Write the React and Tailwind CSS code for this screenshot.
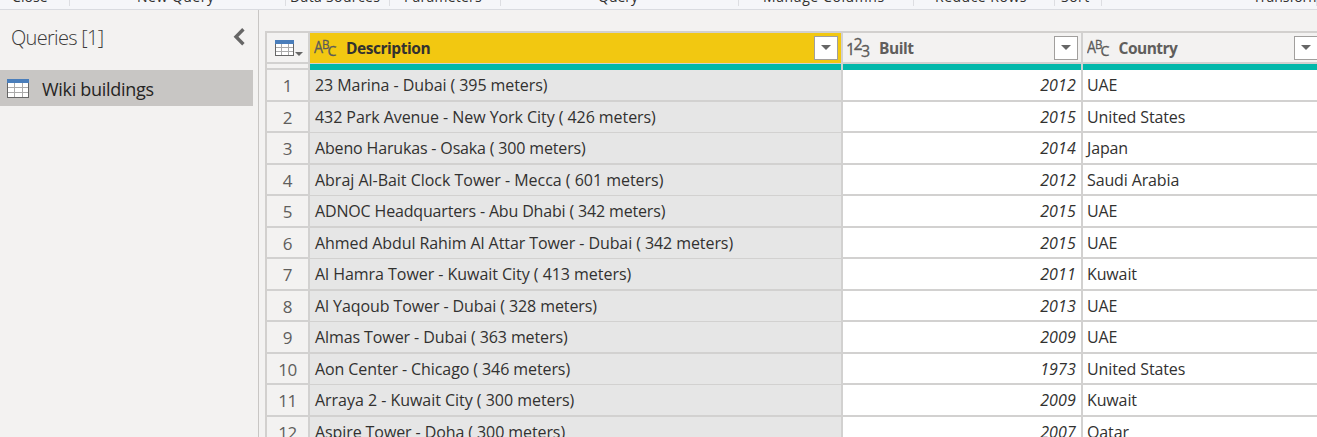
import React from "react";

const GROUPS = [
  { label: "Close", cls: "w-[70px] pl-[12px] tracking-[0.1px]" },
  { label: "New Query", cls: "w-[216px] pl-[67px] tracking-[0.5px]" },
  { label: "Data Sources", cls: "w-[104px] pl-[4px] tracking-[0.35px]" },
  { label: "Parameters", cls: "w-[111px] pl-[14px] tracking-[0.2px]" },
  { label: "Query", cls: "w-[238px] pl-[97px]" },
  { label: "Manage Columns", cls: "w-[175px] pl-[24px] tracking-[0.6px]" },
  { label: "Reduce Rows", cls: "w-[141px] pl-[21px] tracking-[0.5px]" },
  { label: "Sort", cls: "w-[47px] pl-[6px] tracking-[0.5px]" },
  { label: "Transform", cls: "w-[215px] pl-[151px]" },
];

const ROWS = [
  ["23 Marina - Dubai ( 395 meters)", "2012", "UAE", "tracking-[-0.07px]"],
  ["432 Park Avenue - New York City ( 426 meters)", "2015", "United States", "tracking-[-0.06px]"],
  ["Abeno Harukas - Osaka ( 300 meters)", "2014", "Japan", "tracking-[-0.16px]"],
  ["Abraj Al-Bait Clock Tower - Mecca ( 601 meters)", "2012", "Saudi Arabia", "tracking-[-0.02px]"],
  ["ADNOC Headquarters - Abu Dhabi ( 342 meters)", "2015", "UAE", "tracking-[-0.16px]"],
  ["Ahmed Abdul Rahim Al Attar Tower - Dubai ( 342 meters)", "2015", "UAE", "tracking-[-0.08px]"],
  ["Al Hamra Tower - Kuwait City ( 413 meters)", "2011", "Kuwait", "tracking-[-0.04px]"],
  ["Al Yaqoub Tower - Dubai ( 328 meters)", "2013", "UAE", "tracking-[-0.09px]"],
  ["Almas Tower - Dubai ( 363 meters)", "2009", "UAE", "tracking-[-0.09px]"],
  ["Aon Center - Chicago ( 346 meters)", "1973", "United States", "tracking-[-0.09px]"],
  ["Arraya 2 - Kuwait City ( 300 meters)", "2009", "Kuwait", "tracking-[-0.03px]"],
  ["Aspire Tower - Doha ( 300 meters)", "2007", "Qatar", "tracking-[-0.09px]"],
];

function TableIcon({ w, h, head }) {
  const x1 = Math.round(w / 3) + 0.5;
  const x2 = Math.round((2 * w) / 3) + 0.5;
  const step = (h - head) / 3;
  return (
    <svg width={w} height={h} className="block shrink-0" shapeRendering="crispEdges">
      <rect width={w} height={h} fill="#666" />
      <rect x="1" y={head} width={w - 2} height={h - head - 1} fill="#fff" />
      <rect width={w} height={head} fill="#4a7ebb" />
      <path
        d={`M${x1} ${head}V${h - 1}M${x2} ${head}V${h - 1}M1 ${Math.round(head + step) - 0.5}H${w - 1}M1 ${Math.round(head + 2 * step) - 0.5}H${w - 1}`}
        stroke="#aaa"
      />
    </svg>
  );
}

function TypeIcon({ kind }) {
  return (
    <svg width="26" height="24" className="block shrink-0 font-['Open_Sans',sans-serif]" fill="#5c5b59" stroke="#5c5b59" strokeWidth="0.3">
      {kind === "text" ? (
        <>
          <text x="0" y="16" fontSize="15.5" textLength="9" lengthAdjust="spacingAndGlyphs">A</text>
          <text x="8" y="12" fontSize="13" textLength="7.5" lengthAdjust="spacingAndGlyphs">B</text>
          <text x="13.5" y="19" fontSize="14" textLength="9" lengthAdjust="spacingAndGlyphs">C</text>
        </>
      ) : (
        <>
          <text x="-1" y="18" fontSize="16">1</text>
          <text x="6.5" y="13" fontSize="16">2</text>
          <text x="14" y="20" fontSize="16">3</text>
        </>
      )}
    </svg>
  );
}

function FilterButton() {
  return (
    <div className="flex h-[24px] w-[24px] shrink-0 items-center justify-center border border-[#a19f9d] bg-white">
      <svg width="10" height="5" className="mb-px block"><path d="M0 0H10L5 5Z" fill="#666" /></svg>
    </div>
  );
}

function Header({ kind, title, cls, iconCls, titleCls }) {
  return (
    <div className={"flex shrink-0 " + cls}>
      <div className={"mt-[4px] shrink-0 " + iconCls}><TypeIcon kind={kind} /></div>
      <span className={"grow whitespace-nowrap text-[15.5px] font-bold leading-[30px] " + titleCls}>{title}</span>
      <div className="mt-[3px]"><FilterButton /></div>
    </div>
  );
}

export default function App() {
  return (
    <div className="flex h-[437px] w-[1317px] flex-col overflow-hidden bg-[#f3f2f1] font-['Open_Sans',sans-serif] text-[#323130]">
      <div className="flex h-[10px] shrink-0 overflow-hidden border-b border-[#d9dbe0] bg-[#f5f6f9]">
        {GROUPS.map((g) => (
          <div key={g.label} className={"flex h-[6px] shrink-0 border-r border-[#dddee2] whitespace-nowrap " + g.cls}>
            <span className="-mt-[13px] text-[14px] leading-[19px]">{g.label}</span>
          </div>
        ))}
      </div>
      <div className="flex min-h-0 grow">
        <aside className="flex w-[259px] shrink-0 flex-col border-r border-[#c8c6c4]">
          <div className="flex h-[60px] justify-between pl-[11px] pr-[13px]">
            <span className="pt-[13px] text-[20px] font-light leading-[30px] tracking-[-0.7px] text-[#3b3a39]">Queries [1]</span>
            <svg width="12" height="18" className="mt-[18px] block"><path d="M10.4 1.2L3 8.7L10.4 16.2" fill="none" stroke="#666" strokeWidth="3.4" /></svg>
          </div>
          <div className="flex h-[36px] w-[253px] items-center bg-[#c8c6c4] pl-[7px]">
            <TableIcon w={22} h={19} head={4} />
            <span className="pl-[13px] pt-px text-[18px] leading-[26px] tracking-[-0.3px] text-[#252423]">Wiki buildings</span>
          </div>
        </aside>
        <main className="flex grow flex-col overflow-hidden pl-[6px] pt-[21px]">
          <div className="flex w-[1060px] flex-col border-l-2 border-t-2 border-[#d2d0ce] bg-[#d2d1d0]">
            <div className="flex h-[31px] shrink-0 gap-[2px]">
              <div className="flex h-[29px] w-[41px] shrink-0 bg-[#f3f2f1] pl-[8px] pt-[7px]">
                <TableIcon w={19} h={16} head={4} />
                <svg width="8" height="4" className="ml-px mt-[12px] block"><path d="M0 0H8L4 4Z" fill="#666" /></svg>
              </div>
              <Header kind="text" title="Description" cls="h-[30px] w-[531px] bg-[#f2c811] pl-[4px] pr-[3px]" iconCls="w-[32px]" titleCls="tracking-[-0.45px]" />
              <Header kind="number" title="Built" cls="h-[29px] w-[238px] bg-[#f3f2f1] pl-[4px] pr-[3px] text-[#605e5c]" iconCls="w-[32px]" titleCls="tracking-[-0.45px]" />
              <Header kind="text" title="Country" cls="h-[29px] w-[238px] bg-[#f3f2f1] pl-[4px] pr-[3px] text-[#605e5c]" iconCls="w-[31.5px]" titleCls="tracking-[-0.5px]" />
            </div>
            <div className="flex h-[6px] shrink-0 gap-[2px]">
              <div className="h-[4px] w-[41px] shrink-0 bg-[#f3f2f1]" />
              <div className="w-[531px] shrink-0 bg-[#01b8aa]" />
              <div className="w-[238px] shrink-0 bg-[#01b8aa]" />
              <div className="w-[240px] shrink-0 bg-[#01b8aa]" />
            </div>
            {ROWS.map(([name, year, country, track], i) => {
              const odd = i % 2 === 0;
              const h = odd ? "h-[30px] " : "h-[29px] ";
              return (
                <div key={name} className={"flex shrink-0 gap-[2px] whitespace-nowrap text-[16px] leading-[30px] " + (odd ? "h-[32px]" : "h-[31px]")}>
                  <div className={"w-[41px] shrink-0 bg-[#f3f2f1] pt-px text-center text-[17px] tracking-[-0.4px] text-[#605e5c] " + h}>{i + 1}</div>
                  <div className={"h-[30px] w-[531px] shrink-0 bg-[#e6e6e6] pl-[5px] " + track}>{name}</div>
                  <div className={"w-[238px] shrink-0 bg-white pr-[5px] text-right italic tracking-[0.15px] " + h}>{year}</div>
                  <div className={"w-[240px] shrink-0 bg-white pl-[4px] tracking-[-0.13px] " + h}>{country}</div>
                </div>
              );
            })}
          </div>
        </main>
      </div>
    </div>
  );
}
